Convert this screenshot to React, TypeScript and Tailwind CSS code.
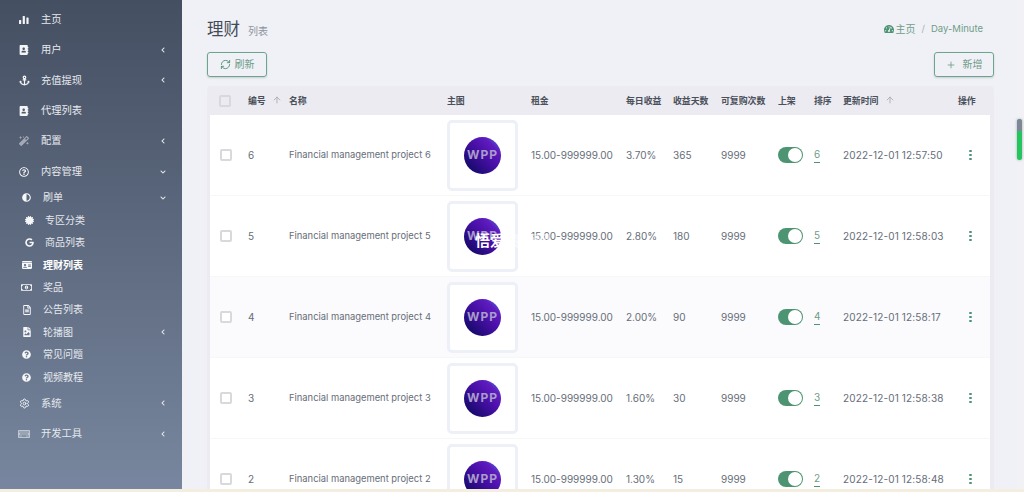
import { ReactNode } from "react";
import {
  FaAddressBook,
  FaAdjust,
  FaAnchor,
  FaCertificate,
  FaChevronDown,
  FaChevronLeft,
  FaFileImage,
  FaGoogle,
  FaIdCard,
  FaKeyboard,
  FaMagic,
  FaQuestionCircle,
  FaRegFileAlt,
  FaRegMoneyBillAlt,
  FaRegQuestionCircle,
  FaTachometerAlt,
} from "react-icons/fa";
import { ArrowUp, Plus, RefreshCw, Settings } from "lucide-react";

const font = "font-['Inter','Noto_Sans_CJK_SC',sans-serif]";
const cols =
  "grid grid-cols-[38px_41px_158px_84px_95px_47px_48px_57px_36px_29px_115px_1fr] items-center";

const rows = [
  { id: 6, rate: "3.70%", days: "365", time: "2022-12-01 12:57:50" },
  { id: 5, rate: "2.80%", days: "180", time: "2022-12-01 12:58:03" },
  { id: 4, rate: "2.00%", days: "90", time: "2022-12-01 12:58:17" },
  { id: 3, rate: "1.60%", days: "30", time: "2022-12-01 12:58:38" },
  { id: 2, rate: "1.30%", days: "15", time: "2022-12-01 12:58:48" },
];

function BarsIcon() {
  return (
    <svg width="10" height="8" viewBox="0 0 10 8" fill="currentColor">
      <rect x="0" y="4" width="2.2" height="4" rx="0.6" />
      <rect x="3.7" y="0" width="2.2" height="8" rx="0.6" />
      <rect x="7.4" y="1.5" width="2.2" height="6.5" rx="0.6" />
    </svg>
  );
}

function Kebab() {
  return (
    <span className="flex w-fit flex-col gap-[1.5px]">
      <span className="size-[2.5px] rounded-full bg-[#4d9473]" />
      <span className="size-[2.5px] rounded-full bg-[#4d9473]" />
      <span className="size-[2.5px] rounded-full bg-[#4d9473]" />
    </span>
  );
}

function MainItem({ icon, label, arrow }: { icon: ReactNode; label: string; arrow?: "left" | "down" }) {
  return (
    <div className="flex h-[30.4px] items-center pl-[18px] pr-[16px] text-[10.25px] text-[#e6e9ee]">
      <span className="flex w-[12px] justify-center text-[#f4f5f7]">{icon}</span>
      <span className="ml-[11px] flex-1">{label}</span>
      {arrow === "left" && <FaChevronLeft size={6} />}
      {arrow === "down" && <FaChevronDown size={6} />}
    </div>
  );
}

function SubItem({
  icon,
  label,
  arrow,
  active,
  deep,
}: {
  icon: ReactNode;
  label: string;
  arrow?: "left" | "down";
  active?: boolean;
  deep?: boolean;
}) {
  return (
    <div
      className={`flex h-[22.4px] items-center pr-[16px] text-[10px] ${deep ? "pl-[24px]" : "pl-[21px]"} ${
        active ? "font-bold text-white" : "text-[#e6e9ee]"
      }`}
    >
      <span className="flex w-[11px] justify-center text-[#f7f8f9]">{icon}</span>
      <span className={`flex-1 ${deep ? "ml-[10px]" : "ml-[11px]"}`}>{label}</span>
      {arrow === "left" && <FaChevronLeft size={6} />}
      {arrow === "down" && <FaChevronDown size={6} />}
    </div>
  );
}

function Sidebar() {
  return (
    <aside className="flex h-full w-[182px] shrink-0 flex-col bg-gradient-to-b from-[#454f62] to-[#78879f] pt-[4.4px]">
      <MainItem icon={<BarsIcon />} label="主页" />
      <MainItem icon={<FaAddressBook size={10} />} label="用户" arrow="left" />
      <MainItem icon={<FaAnchor size={11} />} label="充值提现" arrow="left" />
      <MainItem icon={<FaAddressBook size={10} />} label="代理列表" />
      <MainItem icon={<FaMagic size={10} className="opacity-50" />} label="配置" arrow="left" />
      <MainItem icon={<FaRegQuestionCircle size={10} />} label="内容管理" arrow="down" />
      <div className="flex flex-col">
        <SubItem icon={<FaAdjust size={9} />} label="刷单" arrow="down" />
        <SubItem deep icon={<FaCertificate size={9} />} label="专区分类" />
        <SubItem deep icon={<FaGoogle size={9} />} label="商品列表" />
        <SubItem icon={<FaIdCard size={10} />} label="理财列表" active />
        <SubItem icon={<FaRegMoneyBillAlt size={11} />} label="奖品" />
        <SubItem icon={<FaRegFileAlt size={10} />} label="公告列表" />
        <SubItem icon={<FaFileImage size={10} />} label="轮播图" arrow="left" />
        <SubItem icon={<FaQuestionCircle size={9} />} label="常见问题" />
        <SubItem icon={<FaQuestionCircle size={9} />} label="视频教程" />
      </div>
      <div>
        <MainItem icon={<Settings size={11} />} label="系统" arrow="left" />
        <MainItem icon={<FaKeyboard size={12} className="opacity-60" />} label="开发工具" arrow="left" />
      </div>
    </aside>
  );
}

function Row({ id, rate, days, time, tint }: (typeof rows)[number] & { tint: boolean }) {
  return (
    <div className={`${cols} h-[81px] border-b border-[#f6f7f9] text-[10px] text-[#666d78] ${tint ? "bg-[#fbfbfd]" : "bg-white"}`}>
      <span className="ml-[10px] size-[12px] rounded-[2px] border-2 border-[#d8d9dc] bg-white" />
      <span>{id}</span>
      <span className="text-[9.4px]">Financial management project {id}</span>
      <div className="flex size-[71px] items-center justify-center rounded-[5px] border-[3px] border-[#edf0f6] bg-white">
        <div className="flex size-[37px] items-center justify-center rounded-full bg-[linear-gradient(45deg,#180a6e_15%,#4a10a8_55%,#5f1cc0_78%,#3f7ad0_95%)] text-[12px] font-bold tracking-[1px] text-[#a99bcb]">
          WPP
        </div>
      </div>
      <span>15.00-999999.00</span>
      <span>{rate}</span>
      <span>{days}</span>
      <span>9999</span>
      <div className="flex h-[16px] w-[25px] items-center justify-end rounded-full bg-[#4d9473] pr-[1px]">
        <span className="size-[14px] rounded-full bg-white" />
      </div>
      <span className="w-fit border-b border-dashed border-[#4d9473] text-[#6f9c88]">{id}</span>
      <span className="tracking-[0.15px]">{time}</span>
      <span className="pl-[11px]">
        <Kebab />
      </span>
    </div>
  );
}

export default function App() {
  return (
    <div className={`${font} relative flex h-[492px] w-[1024px] overflow-hidden bg-[#f0f1f6]`}>
      <Sidebar />

      <main className="flex-1 pl-[25px] pr-[30px]">
        {/* Title and breadcrumb */}
        <div className="flex h-[52px] items-center justify-between pt-[6px]">
          <div className="flex items-baseline gap-[8px]">
            <h1 className="text-[16.5px] text-[#444b57]">理财</h1>
            <span className="text-[10px] text-[#8d939c]">列表</span>
          </div>
          <div className="mr-[11px] flex items-center text-[9.5px] text-[#6f9c88]">
            <FaTachometerAlt size={10} className="text-[#4d9473]" />
            <span className="ml-[2px] text-[10px]">主页</span>
            <span className="mx-[6px] text-[#a9aeb6]">/</span>
            <span>Day-Minute</span>
          </div>
        </div>

        {/* Buttons */}
        <div className="flex h-[34px] items-start justify-between">
          <button className="flex h-[25px] w-[60px] items-center justify-center gap-[4px] rounded-[3px] border border-[#6ba58b] text-[10px] text-[#6f9c88] shadow-[0_1px_2px_rgba(0,0,0,0.15)]">
            <RefreshCw size={11} className="text-[#4d9473]" />
            刷新
          </button>
          <button className="flex h-[25px] w-[60px] items-center justify-center gap-[7px] rounded-[3px] border border-[#6ba58b] text-[10px] text-[#6f9c88] shadow-[0_1px_2px_rgba(0,0,0,0.15)]">
            <Plus size={10} />
            新增
          </button>
        </div>

        {/* Table */}
        <div className="rounded-[4px] bg-[#ecebf1] pl-[3px] pr-[4px]">
          <div className={`${cols} h-[29px] text-[8.9px] font-semibold text-[#4a505a]`}>
            <span className="ml-[9px] size-[12px] rounded-[2px] border-2 border-[#d8d9dc]" />
            <span className="flex items-center gap-[6px]">
              编号
              <ArrowUp size={10} className="text-[#a5a9b0]" />
            </span>
            <span>名称</span>
            <span>主图</span>
            <span>租金</span>
            <span>每日收益</span>
            <span>收益天数</span>
            <span>可复购次数</span>
            <span>上架</span>
            <span>排序</span>
            <span className="flex items-center gap-[6px]">
              更新时间
              <ArrowUp size={10} className="text-[#a5a9b0]" />
            </span>
            <span>操作</span>
          </div>
          {rows.map((r, i) => (
            <Row key={r.id} {...r} tint={i === 2} />
          ))}
        </div>
      </main>

      {/* Watermark over row two */}
      <div className="absolute left-[475px] top-[230px] text-[15px] font-bold text-white">
        悟爱<span className="text-white/60">资源网</span>
      </div>

      {/* Scrollbar */}
      <div className="absolute right-0 top-0 h-full w-[7px] bg-[#f2f2f6]">
        <div className="mt-[119px] h-[41px] w-[5px] overflow-hidden rounded-full bg-[#22c55e] shadow-[0_0_3px_rgba(0,0,0,0.3)]">
          <div className="h-[12px] bg-[#7d8795]" />
        </div>
      </div>

      {/* Bottom strip */}
      <div className="absolute bottom-0 left-0 h-[3px] w-full bg-[#f3eee0]" />
    </div>
  );
}
